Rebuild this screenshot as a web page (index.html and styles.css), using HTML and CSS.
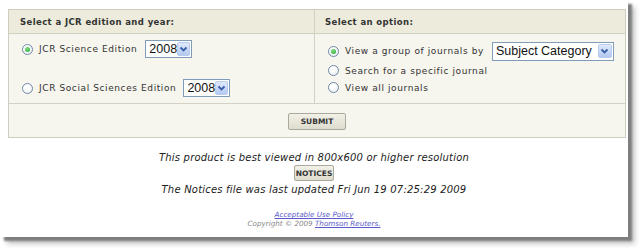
FILE: index.html
```html
<!DOCTYPE html>
<html>
<head>
<meta charset="utf-8">
<link rel="stylesheet" href="styles.css">
</head>
<body>
<div class="frame">
  <div class="panel">
    <div class="head left">Select a JCR edition and year:</div>
    <div class="head right">Select an option:</div>
    <div class="cell left editions">
      <div class="erow">
        <span class="radio on"></span><span class="lbl">JCR Science Edition</span>
        <span class="sel year"><span class="val">2008</span><span class="arr"><svg width="9" height="6" viewBox="0 0 9 6"><path d="M1.5 1.5 L4.5 4.5 L7.5 1.5" fill="none" stroke="#3a5fa8" stroke-width="1.8"/></svg></span></span>
      </div>
      <div class="erow second">
        <span class="radio"></span><span class="lbl">JCR Social Sciences Edition</span>
        <span class="sel year"><span class="val">2008</span><span class="arr"><svg width="9" height="6" viewBox="0 0 9 6"><path d="M1.5 1.5 L4.5 4.5 L7.5 1.5" fill="none" stroke="#3a5fa8" stroke-width="1.8"/></svg></span></span>
      </div>
    </div>
    <div class="cell right options">
      <div class="orow first">
        <span class="radio on"></span><span class="lbl">View a group of journals by</span>
        <span class="sel subj"><span class="val">Subject Category</span><span class="arr"><svg width="9" height="6" viewBox="0 0 9 6"><path d="M1.5 1.5 L4.5 4.5 L7.5 1.5" fill="none" stroke="#3a5fa8" stroke-width="1.8"/></svg></span></span>
      </div>
      <div class="orow"><span class="radio"></span><span class="lbl">Search for a specific journal</span></div>
      <div class="orow"><span class="radio"></span><span class="lbl">View all journals</span></div>
    </div>
    <div class="foot"><span class="btn submit">SUBMIT</span></div>
  </div>
  <div class="notes">
    <p class="note">This product is best viewed in 800x600 or higher resolution</p>
    <span class="btn notices">NOTICES</span>
    <p class="note">The Notices file was last updated Fri Jun 19 07:25:29 2009</p>
  </div>
  <div class="legal">
    <a href="#" class="link">Acceptable Use Policy</a>
    <div>Copyright © 2009 <a href="#" class="link">Thomson Reuters.</a></div>
  </div>
</div>
</body>
</html>
```
FILE: styles.css
```css
html, body {
  margin: 0;
  padding: 0;
  background: #ffffff;
}
body {
  width: 640px;
  height: 248px;
  overflow: hidden;
  font-family: "DejaVu Sans", Verdana, sans-serif;
  color: #222;
}
.frame {
  width: 628px;
  height: 237px;
  background: #fff;
  box-shadow: 4px 4px 2px #7e7e7e, 7px 7px 5px rgba(0,0,0,0.22);
  padding-top: 9px;
  box-sizing: border-box;
}
.panel {
  margin-left: 8px;
  width: 616px;
  border: 1px solid #cfcdbf;
  display: grid;
  grid-template-columns: 306px 1fr;
  grid-template-rows: 24px 70px 33px;
  background: #f6f5ee;
}
.head {
  background: #ecebdc;
  border-bottom: 1px solid #d3d1c3;
  font-weight: bold;
  font-size: 8.5px;
  letter-spacing: 0.4px;
  display: flex;
  align-items: center;
  color: #333;
}
.head.left { padding-left: 11px; border-right: 1px solid #d3d1c3; }
.head.right { padding-left: 10px; }
.cell {
  border-bottom: 1px solid #d3d1c3;
  font-size: 9px;
  letter-spacing: 0.6px;
  color: #333;
}
.cell.left { border-right: 1px solid #d3d1c3; }
.editions {
  display: flex;
  flex-direction: column;
  padding-left: 13px;
  padding-top: 6px;
  gap: 21px;
}
.erow, .orow {
  display: flex;
  align-items: center;
}
.radio {
  width: 11px;
  height: 11px;
  border: 1px solid #6f88a6;
  border-radius: 50%;
  box-sizing: border-box;
  background: radial-gradient(circle at 40% 35%, #ffffff 30%, #e2e6ea 100%);
  display: inline-flex;
  align-items: center;
  justify-content: center;
  margin-right: 6px;
  flex: none;
}
.radio.on::after {
  content: "";
  width: 5px;
  height: 5px;
  border-radius: 50%;
  background: radial-gradient(circle at 40% 35%, #7ee07a, #27a23a);
}
.sel {
  display: inline-flex;
  align-items: center;
  height: 18px;
  box-sizing: border-box;
  border: 1px solid #7f9db9;
  background: #fff;
  font-family: "Liberation Sans", Arial, sans-serif;
  font-size: 12.5px;
  letter-spacing: 0;
  color: #111;
  padding-left: 3px;
}
.sel .val { flex: 1; line-height: 16px; }
.sel .arr {
  width: 14px;
  height: 14px;
  margin-right: 1px;
  border-radius: 2px;
  background: linear-gradient(#dfe9fb, #b3c9f1);
  border: 1px solid #b9cbef;
  box-sizing: border-box;
  display: flex;
  align-items: center;
  justify-content: center;
}
.year { width: 47px; margin-left: 8px; }
.erow.second .year { margin-left: 7px; }
.options {
  padding-left: 13px;
  padding-top: 6px;
  display: flex;
  flex-direction: column;
}
.orow { height: 17px; }
.orow.first { height: 22px; }
.subj { width: 122px; margin-left: 8px; height: 19px; }
.foot {
  grid-column: 1 / 3;
  display: flex;
  justify-content: center;
  align-items: center;
  padding-top: 1px;
}
.btn {
  display: inline-flex;
  align-items: center;
  justify-content: center;
  font-family: "DejaVu Sans", Verdana, sans-serif;
  font-weight: bold;
  font-size: 7.5px;
  color: #333;
  background: linear-gradient(#f2f1e8, #dedcce);
  border: 1px solid #aaa99c;
  border-radius: 2px;
  box-sizing: border-box;
}
.submit { width: 58px; height: 17px; }
.notes {
  display: flex;
  flex-direction: column;
  align-items: center;
  margin-top: 13px;
}
.note {
  margin: 0;
  font-style: italic;
  font-size: 10px;
  letter-spacing: 0.2px;
  color: #222;
  line-height: 14px;
}
.notices { width: 40px; height: 16px; margin: 0 0 2px; }
.legal {
  margin-top: 13px;
  display: flex;
  flex-direction: column;
  align-items: center;
  font-style: italic;
  font-size: 7.2px;
  color: #888;
  line-height: 9px;
}
.link { color: #5a5ac8; text-decoration: underline; }
```
